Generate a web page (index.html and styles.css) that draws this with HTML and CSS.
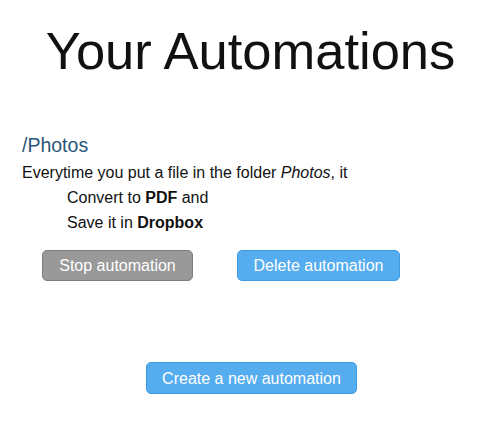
FILE: index.html
```html
<!DOCTYPE html>
<html>
<head>
<meta charset="utf-8">
<link rel="stylesheet" href="styles.css">
</head>
<body>
<div class="page">
  <h1 class="title">Your Automations</h1>
  <section class="automation">
    <h2 class="folder">/Photos</h2>
    <p class="desc">Everytime you put a file in the folder <em>Photos</em>, it</p>
    <ul class="steps">
      <li>Convert to <strong>PDF</strong> and</li>
      <li>Save it in <strong>Dropbox</strong></li>
    </ul>
    <div class="actions">
      <button class="btn btn-gray">Stop automation</button>
      <button class="btn btn-blue">Delete automation</button>
    </div>
  </section>
  <div class="create-row">
    <button class="btn btn-blue btn-create">Create a new automation</button>
  </div>
</div>
</body>
</html>
```
FILE: styles.css
```css
* { box-sizing: border-box; }
html, body { margin: 0; padding: 0; background: #fff; }
body {
  font-family: "Liberation Sans", Arial, Helvetica, sans-serif;
  color: #111;
  width: 490px;
  height: 426px;
  overflow: hidden;
}
.page { padding: 0 22px; }
.title {
  margin: 0;
  padding: 21px 0 0 11px;
  font-size: 52.5px;
  font-weight: normal;
  line-height: 60px;
  text-align: center;
  color: #111;
}
.automation { margin-top: 52px; }
.folder {
  margin: 0;
  font-size: 19.5px;
  font-weight: normal;
  line-height: 24px;
  color: #2c5678;
}
.desc {
  margin: 3px 0 0;
  font-size: 16px;
  line-height: 25px;
}
.steps {
  list-style: none;
  margin: 0;
  padding: 0 0 0 45px;
  font-size: 16px;
  line-height: 25px;
}
.actions {
  display: flex;
  gap: 44px;
  margin: 15px 0 0 20px;
}
.btn {
  font-family: "Liberation Sans", Arial, Helvetica, sans-serif;
  font-size: 16px;
  color: #fff;
  height: 31px;
  padding: 0 10px;
  border-radius: 5px;
  border: 1px solid;
  line-height: 29px;
  white-space: nowrap;
}
.btn-gray { background: #999; border-color: #7d7d7d; width: 151px; }
.btn-blue { background: #55acee; border-color: #3d9be6; width: 163px; }
.create-row { margin: 81px 0 0 124px; }
.btn-create { width: 211px; height: 32px; }
```
